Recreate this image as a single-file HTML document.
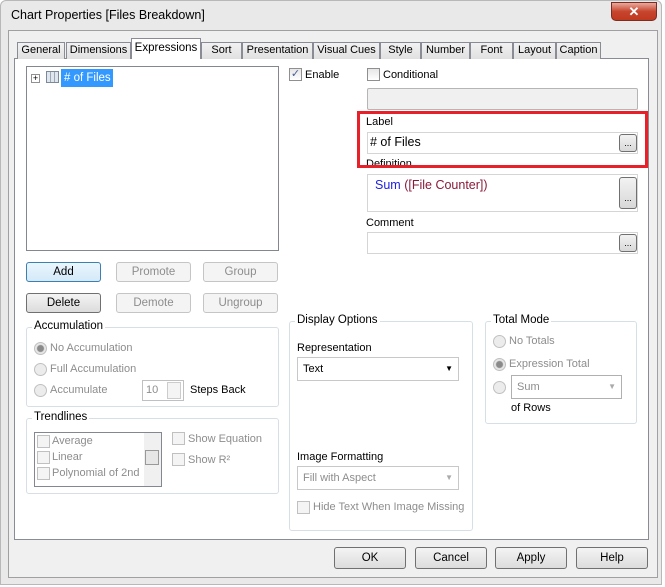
<!DOCTYPE html>
<html><head><style>
*{box-sizing:border-box;margin:0;padding:0}
body{width:665px;height:587px;background:#fff;font-family:"Liberation Sans",sans-serif;font-size:11px;line-height:15px;color:#000;position:relative;overflow:hidden}
.a{position:absolute}
.win{left:0;top:0;width:662px;height:585px;background:#e9e9e9;border:1px solid #b8b8b8;border-radius:6px 6px 0 0}
.client{left:8px;top:30px;width:650px;height:548px;background:#f0f0f0;border:1px solid #a0a0a0}
.panel{left:14px;top:58px;width:635px;height:482px;background:#fff;border:1px solid #898c95}
.tab{top:42px;height:17px;background:linear-gradient(#f2f2f2,#e0e0e0);border:1px solid #898c95;border-bottom:none;text-align:center;line-height:15px;color:#000}
.tab.sel{top:38px;height:21px;background:#fff;line-height:19px;z-index:2}
.box{background:#fff;border:1px solid #abadb3}
.btn{height:20px;border:1px solid #adadad;border-radius:3px;background:linear-gradient(#f4f4f4,#dcdcdc);text-align:center;line-height:18px;color:#000;font-size:11.5px}
.dis{color:#8d8d8d;background:#f4f4f4;border-color:#c5c5c5}
.grp{border:1px solid #d5dfe5;border-radius:3px}
.leg{background:#fff;padding:0 2px;line-height:13px;font-size:11.5px}
.gray{color:#8d8d8d}
.cb{width:13px;height:13px;border:1px solid #8f8f8f;background:linear-gradient(#e6e6e6,#fff)}
.cbd{border-color:#c0c0c0;background:#f4f4f4}
.rad{width:13px;height:13px;border-radius:50%;border:1px solid #c0c0c0;background:#ececec}
.dots{width:18px;height:18px;border:1px solid #707070;border-radius:3px;background:linear-gradient(#f2f2f2,#d8d8d8);font-size:9px;text-align:center;line-height:16px}
</style></head><body>
<div class="a win"></div>
<div class="a" style="left:11px;top:8px;font-size:12.5px">Chart Properties [Files Breakdown]</div>
<div class="a" style="left:611px;top:2px;width:46px;height:19px;border:1px solid #7a2d22;border-radius:0 0 5px 5px;background:linear-gradient(#e9a99c,#c7452e 50%,#c0391f);color:#fff;font-weight:bold;text-align:center;line-height:17px;font-size:13px">✕</div>
<div class="a client"></div>
<div class="a panel"></div>
<div class="a tab" style="left:17px;width:48px">General</div>
<div class="a tab" style="left:66px;width:65px">Dimensions</div>
<div class="a tab sel" style="left:131px;width:70px;font-size:11.5px">Expressions</div>
<div class="a tab" style="left:201px;width:41px">Sort</div>
<div class="a tab" style="left:242px;width:71px">Presentation</div>
<div class="a tab" style="left:313px;width:67px">Visual Cues</div>
<div class="a tab" style="left:380px;width:41px">Style</div>
<div class="a tab" style="left:421px;width:49px">Number</div>
<div class="a tab" style="left:470px;width:43px">Font</div>
<div class="a tab" style="left:513px;width:43px">Layout</div>
<div class="a tab" style="left:556px;width:45px">Caption</div>

<div class="a box" style="left:26px;top:66px;width:253px;height:185px;border-color:#828790"></div>
<div class="a" style="left:31px;top:74px;width:9px;height:9px;border:1px solid #919191;font-size:9px;line-height:7px;text-align:center">+</div>
<div class="a" style="left:46px;top:71px;width:13px;height:12px;border:1px solid #7a8a9a;background:repeating-linear-gradient(90deg,#dfe6ee 0 3px,#9aa8b6 3px 4px)"></div>
<div class="a" style="left:61px;top:69px;width:52px;height:18px;background:#3399ff;color:#fff;line-height:18px;padding-left:3px;font-size:11.5px">#&nbsp;of Files</div>

<div class="a btn" style="left:26px;top:262px;width:75px;border-color:#3c7fb1;background:linear-gradient(#eaf6fd,#d4e9f8)">Add</div>
<div class="a btn dis" style="left:116px;top:262px;width:75px">Promote</div>
<div class="a btn dis" style="left:203px;top:262px;width:75px">Group</div>
<div class="a btn" style="left:26px;top:293px;width:75px;border-color:#707070">Delete</div>
<div class="a btn dis" style="left:116px;top:293px;width:75px">Demote</div>
<div class="a btn dis" style="left:203px;top:293px;width:75px">Ungroup</div>

<div class="a grp" style="left:26px;top:327px;width:253px;height:80px"></div>
<div class="a leg" style="left:32px;top:320px">Accumulation</div>
<div class="a rad" style="left:34px;top:342px;background:radial-gradient(#8a8a8a 3px,#e6e6e6 4px)"></div>
<div class="a gray" style="left:50px;top:341px">No Accumulation</div>
<div class="a rad" style="left:34px;top:363px"></div>
<div class="a gray" style="left:50px;top:362px">Full Accumulation</div>
<div class="a rad" style="left:34px;top:384px"></div>
<div class="a gray" style="left:50px;top:383px">Accumulate</div>
<div class="a" style="left:142px;top:380px;width:42px;height:21px;border:1px solid #c0c0c0;background:#fff;padding-left:3px;line-height:19px"><span class="gray">10</span></div>
<div class="a" style="left:167px;top:382px;width:14px;height:17px;border:1px solid #ccc;background:#f4f4f4"></div>
<div class="a" style="left:190px;top:383px">Steps Back</div>

<div class="a grp" style="left:26px;top:418px;width:253px;height:76px"></div>
<div class="a leg" style="left:32px;top:411px">Trendlines</div>
<div class="a" style="left:34px;top:432px;width:128px;height:55px;border:1px solid #828790;background:#fff;overflow:hidden"></div>
<div class="a cb cbd" style="left:37px;top:435px"></div><div class="a gray" style="left:52px;top:434px">Average</div>
<div class="a cb cbd" style="left:37px;top:451px"></div><div class="a gray" style="left:52px;top:450px">Linear</div>
<div class="a cb cbd" style="left:37px;top:467px"></div><div class="a gray" style="left:52px;top:466px;width:90px;overflow:hidden;white-space:nowrap">Polynomial of 2nd d</div>
<div class="a" style="left:144px;top:433px;width:17px;height:53px;background:#f0f0f0"></div>
<div class="a" style="left:145px;top:450px;width:14px;height:15px;border:1px solid #999;background:#e6e6e6"></div>
<div class="a cb cbd" style="left:172px;top:432px"></div><div class="a gray" style="left:188px;top:432px">Show Equation</div>
<div class="a cb cbd" style="left:172px;top:453px"></div><div class="a gray" style="left:188px;top:453px">Show R²</div>

<div class="a grp" style="left:289px;top:321px;width:184px;height:210px"></div>
<div class="a leg" style="left:295px;top:314px">Display Options</div>
<div class="a" style="left:297px;top:341px">Representation</div>
<div class="a" style="left:297px;top:357px;width:162px;height:24px;border:1px solid #c8c8c8;background:#fff;padding-left:5px;line-height:22px">Text<span style="position:absolute;right:5px;top:0;font-size:8px">▼</span></div>
<div class="a" style="left:297px;top:450px">Image Formatting</div>
<div class="a gray" style="left:297px;top:466px;width:162px;height:24px;border:1px solid #c8c8c8;background:#fff;padding-left:5px;line-height:22px">Fill with Aspect<span style="position:absolute;right:5px;top:0;font-size:8px;color:#aaa">▼</span></div>
<div class="a cb cbd" style="left:297px;top:501px"></div><div class="a gray" style="left:313px;top:500px">Hide Text When Image Missing</div>

<div class="a grp" style="left:485px;top:321px;width:152px;height:103px"></div>
<div class="a leg" style="left:491px;top:314px">Total Mode</div>
<div class="a rad" style="left:493px;top:335px"></div><div class="a gray" style="left:509px;top:334px">No Totals</div>
<div class="a rad" style="left:493px;top:358px;background:radial-gradient(#8a8a8a 3px,#e6e6e6 4px)"></div><div class="a gray" style="left:509px;top:357px">Expression Total</div>
<div class="a rad" style="left:493px;top:381px"></div>
<div class="a gray" style="left:511px;top:375px;width:111px;height:24px;border:1px solid #b0b0b0;background:#fff;padding-left:5px;line-height:22px">Sum<span style="position:absolute;right:5px;top:0;font-size:8px;color:#aaa">▼</span></div>
<div class="a" style="left:511px;top:401px">of Rows</div>

<div class="a cb" style="left:289px;top:68px;text-align:center;line-height:11px;font-size:11px;color:#4a5f97">✓</div><div class="a" style="left:305px;top:68px">Enable</div>
<div class="a cb" style="left:367px;top:68px"></div><div class="a" style="left:383px;top:68px">Conditional</div>
<div class="a" style="left:367px;top:88px;width:271px;height:22px;border:1px solid #b5b5b5;background:#f0f0f0;border-radius:2px"></div>
<div class="a" style="left:366px;top:115px">Label</div>
<div class="a box" style="left:367px;top:132px;width:271px;height:22px;padding-left:2px;line-height:19px;font-size:12.5px;border-color:#d5d5d5">#&nbsp;of Files</div>
<div class="a dots" style="left:619px;top:134px">...</div>
<div class="a" style="left:366px;top:157px">Definition</div>
<div class="a" style="left:357px;top:111px;width:291px;height:57px;border:3px solid #e8202a"></div>
<div class="a box" style="left:367px;top:174px;width:271px;height:38px;padding:3px 7px;font-size:12.5px;border-color:#d5d5d5"><span style="color:#2020e0">Sum</span> <span style="color:#8a1a3a">([File Counter])</span></div>
<div class="a dots" style="left:619px;top:177px;height:32px;line-height:40px">...</div>
<div class="a" style="left:366px;top:216px">Comment</div>
<div class="a box" style="left:367px;top:232px;width:271px;height:22px;border-color:#d5d5d5"></div>
<div class="a dots" style="left:619px;top:234px">...</div>

<div class="a btn" style="left:334px;top:547px;width:72px;height:22px;line-height:20px;border-color:#707070">OK</div>
<div class="a btn" style="left:415px;top:547px;width:72px;height:22px;line-height:20px;border-color:#707070">Cancel</div>
<div class="a btn" style="left:495px;top:547px;width:72px;height:22px;line-height:20px;border-color:#707070">Apply</div>
<div class="a btn" style="left:576px;top:547px;width:72px;height:22px;line-height:20px;border-color:#707070">Help</div>
</body></html>
